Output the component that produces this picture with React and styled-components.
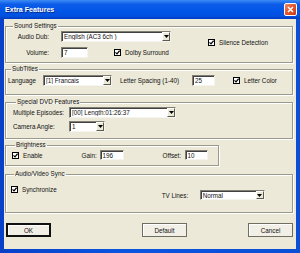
import styled, { createGlobalStyle } from 'styled-components';

const Global = createGlobalStyle`
  html, body {
    margin: 0;
    padding: 0;
    background: #ece9d8;
  }
  body {
    font-family: "Liberation Sans", Arial, sans-serif;
    font-size: 6.3px;
    color: #111;
  }
`;

const Window = styled.div`
  width: 300px;
  height: 253px;
  box-sizing: border-box;
  display: flex;
  flex-direction: column;
  background: linear-gradient(90deg, #0840c8 0%, #0a55e0 40%, #0a4fd6 100%);
  overflow: hidden;
`;

const TitleBar = styled.div`
  height: 19px;
  flex: none;
  display: flex;
  align-items: center;
  justify-content: space-between;
  padding: 0 3px 0 5px;
  background: linear-gradient(180deg, #3d8cf6 0%, #0d5ce8 22%, #0055e6 60%, #0250e0 85%, #003cc0 100%);
`;

const Title = styled.span`
  color: #fff;
  font-weight: bold;
  font-size: 7.1px;
  text-shadow: 1px 1px 0 #0a2a8a;
`;

const CloseBtn = styled.span`
  width: 13px;
  height: 13px;
  box-sizing: border-box;
  border: 1px solid #fff;
  border-radius: 2px;
  background: linear-gradient(135deg, #f2876a 0%, #e2542c 50%, #c93a18 100%);
  display: flex;
  align-items: center;
  justify-content: center;
`;

const Body = styled.div`
  flex: 1;
  margin: 0 4px 4px 4px;
  background: #ece9d8;
  padding: 3px 3px 0 1px;
  display: flex;
  flex-direction: column;
`;

const Group = styled.fieldset`
  margin: ${p => p.$mt || 0}px 0 0 0;
  padding: ${p => p.$pad};
  border: 1px solid #9a9a8a;
  box-shadow: inset 1px 1px 0 #fff, 1px 1px 0 #fff;
  min-width: 0;
  width: ${p => (p.$w ? `${p.$w}px` : 'auto')};
  box-sizing: border-box;

  legend {
    padding: 0 1px;
    margin-left: 3px;
    line-height: 8px;
    font-size: 6.3px;
  }
`;

const Row = styled.div`
  display: flex;
  align-items: center;
  height: ${p => p.$h || 11}px;
  margin-top: ${p => p.$mt || 0}px;
`;

const Col = styled.div`
  display: flex;
  flex-direction: column;
  width: ${p => p.$w}px;
  flex: none;
`;

const Label = styled.span`
  flex: none;
  width: ${p => p.$w}px;
  text-align: ${p => (p.$right ? 'right' : 'left')};
  margin-left: ${p => p.$ml || 0}px;
  white-space: nowrap;
`;

const Field = styled.div`
  flex: none;
  box-sizing: border-box;
  width: ${p => p.$w}px;
  height: ${p => p.$h || 11}px;
  margin-left: ${p => p.$ml || 0}px;
  background: #fff;
  border: 1px solid;
  border-color: #7f7f74 #f4f3ee #f4f3ee #7f7f74;
  box-shadow: inset 1px 1px 0 #404040;
  display: flex;
  align-items: center;
  padding-left: 2px;
  white-space: nowrap;
  overflow: hidden;
`;

const Value = styled.span`
  flex: 1;
  overflow: hidden;
`;

const Arrow = styled.span`
  flex: none;
  width: 8px;
  height: 100%;
  box-sizing: border-box;
  background: #ece9d8;
  border: 1px solid;
  border-color: #fff #5a5a50 #5a5a50 #fff;
  display: flex;
  align-items: center;
  justify-content: center;
`;

const Check = styled.label`
  flex: none;
  display: flex;
  align-items: center;
  gap: 4px;
  margin-left: ${p => p.$ml || 0}px;
  margin-top: ${p => p.$mt || 0}px;
  height: 10px;
  white-space: nowrap;
`;

const Box = styled.span`
  width: 7px;
  height: 7px;
  box-sizing: border-box;
  border: 1px solid #000;
  background: #fff;
  display: flex;
  align-items: center;
  justify-content: center;
`;

const Flex = styled.div`
  display: flex;
  align-items: flex-start;
`;

const Buttons = styled.div`
  display: flex;
  margin-top: 10px;
`;

const Button = styled.div`
  width: 45px;
  height: 14px;
  box-sizing: border-box;
  margin-left: ${p => p.$ml || 0}px;
  display: flex;
  align-items: center;
  justify-content: center;
  background: #f1efe6;
  border: ${p => (p.$default ? '2px solid #111' : '1px solid #6e6e62')};
  box-shadow: inset 1px 1px 0 #fff;
`;

function Select({ value, w, ml, h }) {
  return (
    <Field $w={w} $ml={ml} $h={h}>
      <Value>{value}</Value>
      <Arrow>
        <svg width="5" height="3" viewBox="0 0 5 3">
          <path d="M0 0h5L2.5 3z" fill="#000" />
        </svg>
      </Arrow>
    </Field>
  );
}

function CheckBox({ text, ml, mt }) {
  return (
    <Check $ml={ml} $mt={mt}>
      <Box>
        <svg width="5" height="5" viewBox="0 0 5 5">
          <path d="M0.5 2.3l1.5 1.6 2.6-3.2" stroke="#000" strokeWidth="1.2" fill="none" />
        </svg>
      </Box>
      {text}
    </Check>
  );
}

export default function App() {
  return (
    <Window>
      <Global />
      <TitleBar>
        <Title>Extra Features</Title>
        <CloseBtn>
          <svg width="7" height="7" viewBox="0 0 7 7">
            <path d="M1 1l5 5M6 1l-5 5" stroke="#fff" strokeWidth="1.5" />
          </svg>
        </CloseBtn>
      </TitleBar>
      <Body>
        <Group $pad="1px 4px 4px 4px">
          <legend>Sound Settings</legend>
          <Flex>
            <Col $w={162}>
              <Row>
                <Label $w={39} $right>Audio Dub:</Label>
                <Select value="English (AC3 6ch )" w={110} ml={12} />
              </Row>
              <Row $mt={5}>
                <Label $w={39} $right>Volume:</Label>
                <Field $w={27} $ml={12}>7</Field>
                <CheckBox text="Dolby Surround" ml={26} />
              </Row>
            </Col>
            <CheckBox text="Silence Detection" ml={36} mt={6} />
          </Flex>
        </Group>

        <Group $mt={2} $pad="2px 2px 8px 2px">
          <legend>SubTitles</legend>
          <Row>
            <Label $w={35}>Language</Label>
            <Select value="[1] Francais" w={69} />
            <Label $w={72} $ml={8}>Letter Spacing (1-40)</Label>
            <Field $w={23}>25</Field>
            <CheckBox text="Letter Color" ml={18} />
          </Row>
        </Group>

        <Group $mt={3} $pad="1px 7px 6px 7px">
          <legend>Special DVD Features</legend>
          <Row>
            <Label $w={56}>Multiple Episodes:</Label>
            <Select value="[00] Length:01:26:37" w={107} />
          </Row>
          <Row $mt={3}>
            <Label $w={56}>Camera Angle:</Label>
            <Select value="1" w={36} />
          </Row>
        </Group>

        <Group $mt={2} $w={214} $pad="1px 6px 5px 6px">
          <legend>Brightness</legend>
          <Row $h={10}>
            <CheckBox text="Enable" />
            <Label $w={18} $ml={39}>Gain:</Label>
            <Field $w={24} $h={10}>196</Field>
            <Label $w={22} $ml={39}>Offset:</Label>
            <Field $w={23} $h={10}>10</Field>
          </Row>
        </Group>

        <Group $mt={4} $pad="0 5px 12px 5px">
          <legend>Audio/Video Sync</legend>
          <Flex>
            <CheckBox text="Synchronize" mt={6} />
            <Row $mt={12} $h={10}>
              <Label $w={38} $ml={105}>TV Lines:</Label>
              <Select value="Normal" w={65} h={10} />
            </Row>
          </Flex>
        </Group>

        <Buttons>
          <Button $default $ml={1}>OK</Button>
          <Button $ml={91}>Default</Button>
          <Button $ml={61}>Cancel</Button>
        </Buttons>
      </Body>
    </Window>
  );
}
